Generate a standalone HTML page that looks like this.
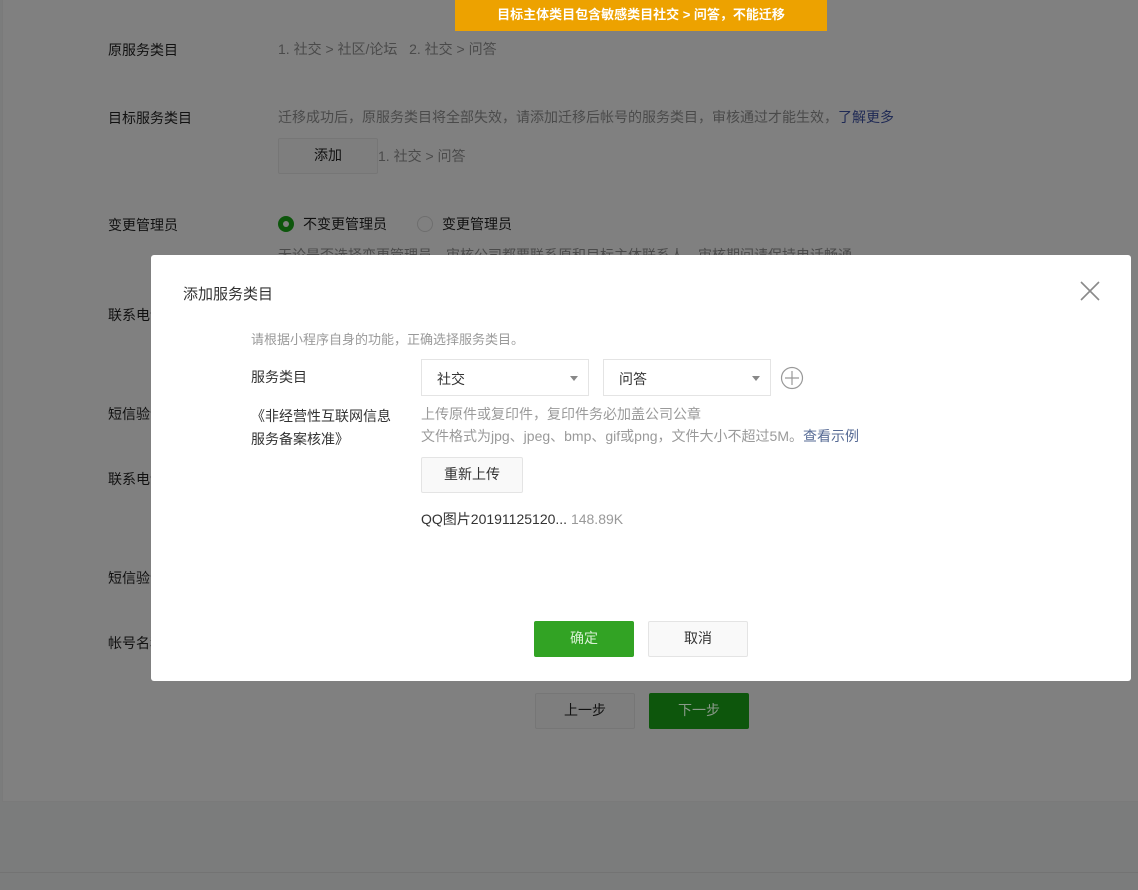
<!DOCTYPE html>
<html><head><meta charset="utf-8"><style>
*{margin:0;padding:0;box-sizing:border-box}
body{width:1138px;height:890px;overflow:hidden;background:#7b7c7c;font-family:"Liberation Sans","Noto Sans CJK SC",sans-serif;font-size:14px;position:relative;color:#111}
.a{position:absolute;white-space:nowrap}
.panel{position:absolute;left:2px;top:-2px;width:1140px;height:804px;background:#808080;border:1px solid #7a7a7a}
.lab{color:#111;font-size:14px}
.val{color:#4a4a4a;font-size:14px}
.modal{position:absolute;left:151px;top:255px;width:980px;height:426px;background:#fff;border-radius:3px}
.m{position:absolute;white-space:nowrap}
.sel{position:absolute;height:37px;border:1px solid #e4e4e4;background:#fff;font-size:14px;padding:9px 0 0 15px;color:#333}
.sel:after{content:"";position:absolute;right:10px;top:16px;border-left:4px solid transparent;border-right:4px solid transparent;border-top:5px solid #888}
.btn{position:absolute;height:36px;border:1px solid #e4e4e4;background:#f9f9f9;border-radius:2px;text-align:center;line-height:33px;font-size:14px;color:#333}
</style></head><body>
<div class="panel"></div>
<div class="a" style="left:0;top:872px;width:1138px;height:1px;background:#737373"></div>
<div class="a lab" style="left:108px;top:40px">原服务类目</div>
<div class="a val" style="left:278px;top:39px">1. 社交 &gt; 社区/论坛&nbsp;&nbsp; 2. 社交 &gt; 问答</div>
<div class="a lab" style="left:108px;top:108px">目标服务类目</div>
<div class="a val" style="left:278px;top:107px">迁移成功后，原服务类目将全部失效，请添加迁移后帐号的服务类目，审核通过才能生效，<span style="color:#1f2a55">了解更多</span></div>
<div class="a" style="left:278px;top:138px;width:100px;height:36px;border:1px solid #767676;border-radius:2px;background:#7e7e7e;text-align:center;line-height:33px;color:#111">添加</div>
<div class="a val" style="left:378px;top:146px">1. 社交 &gt; 问答</div>
<div class="a lab" style="left:108px;top:215px">变更管理员</div>
<div class="a" style="left:278px;top:216px;width:16px;height:16px;border-radius:50%;background:#0d560c"><div style="position:absolute;left:5px;top:5px;width:6px;height:6px;border-radius:50%;background:#808080"></div></div>
<div class="a lab" style="left:303px;top:214px">不变更管理员</div>
<div class="a" style="left:417px;top:216px;width:16px;height:16px;border-radius:50%;border:1px solid #6e6e6e"></div>
<div class="a lab" style="left:442px;top:214px">变更管理员</div>
<div class="a val" style="left:278px;top:245px">无论是否选择变更管理员，审核公司都要联系原和目标主体联系人，审核期间请保持电话畅通</div>
<div class="a lab" style="left:108px;top:305px">联系电话</div>
<div class="a lab" style="left:108px;top:404px">短信验证</div>
<div class="a lab" style="left:108px;top:469px">联系电话</div>
<div class="a lab" style="left:108px;top:568px">短信验证</div>
<div class="a lab" style="left:108px;top:633px">帐号名称</div>
<div class="a" style="left:535px;top:693px;width:100px;height:36px;border:1px solid #767676;border-radius:2px;background:#7e7e7e;text-align:center;line-height:33px;color:#111">上一步</div>
<div class="a" style="left:649px;top:693px;width:100px;height:36px;border-radius:2px;background:#0d560c;text-align:center;line-height:35px;color:#8a9a8a">下一步</div>

<div class="modal">
<div class="m" style="left:32px;top:28px;font-size:15px;color:#333">添加服务类目</div>
<svg class="m" style="left:929px;top:26px" width="20" height="20" viewBox="0 0 20 20"><path d="M1 1L19 19M19 1L1 19" stroke="#8a8a8a" stroke-width="1.6"/></svg>
<div class="m" style="left:100px;top:74px;font-size:13px;color:#9a9a9a">请根据小程序自身的功能，正确选择服务类目。</div>
<div class="m" style="left:100px;top:112px;color:#333">服务类目</div>
<div class="sel" style="left:270px;top:104px;width:168px">社交</div>
<div class="sel" style="left:452px;top:104px;width:168px">问答</div>
<svg class="m" style="left:629px;top:111px" width="24" height="24" viewBox="0 0 24 24"><circle cx="12" cy="12" r="10.5" fill="none" stroke="#999" stroke-width="1.2"/><path d="M12 5V19M5 12H19" stroke="#999" stroke-width="1.2"/></svg>
<div class="m" style="left:100px;top:150px;color:#333;line-height:23px">《非经营性互联网信息<br>服务备案核准》</div>
<div class="m" style="left:270px;top:148px;font-size:14px;color:#9a9a9a;line-height:22px">上传原件或复印件，复印件务必加盖公司公章<br>文件格式为jpg、jpeg、bmp、gif或png，文件大小不超过5M。<span style="color:#576b95">查看示例</span></div>
<div class="btn" style="left:270px;top:202px;width:102px">重新上传</div>
<div class="m" style="left:270px;top:254px;color:#333">QQ图片20191125120... <span style="color:#999">148.89K</span></div>
<div class="m" style="left:383px;top:366px;width:100px;height:36px;background:#32a324;border-radius:2px;text-align:center;line-height:35px;color:#d8f0d4">确定</div>
<div class="btn" style="left:497px;top:366px;width:100px">取消</div>
</div>
<div class="a" style="left:455px;top:0;width:372px;height:31px;background:#eda200;color:#fff;font-weight:bold;font-size:13px;text-align:center;line-height:30px">目标主体类目包含敏感类目社交 &gt; 问答，不能迁移</div>
</body></html>
